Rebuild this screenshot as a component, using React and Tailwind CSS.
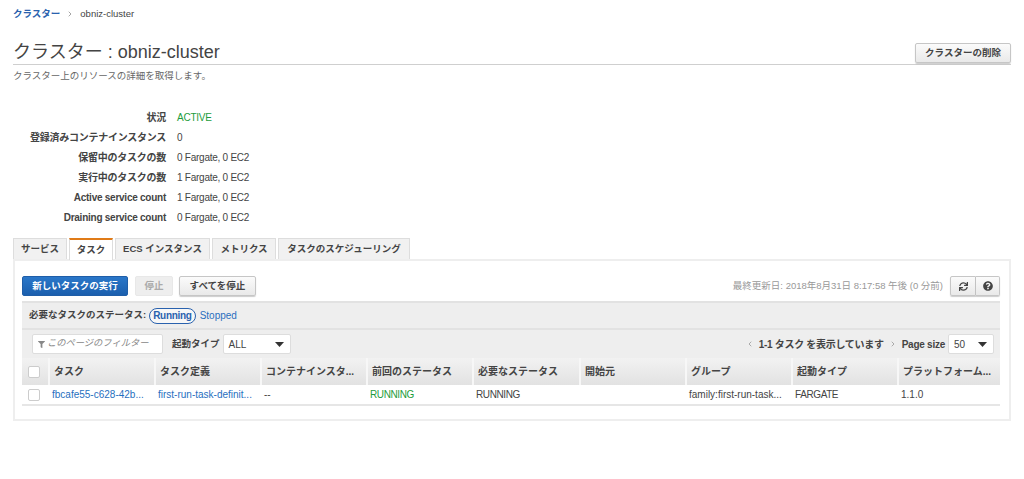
import { ChevronLeft, ChevronRight } from "lucide-react";
import { FaFilter, FaQuestionCircle, FaSync } from "react-icons/fa";

const details = [
  { label: "状況", value: "ACTIVE", green: true },
  { label: "登録済みコンテナインスタンス", value: "0" },
  { label: "保留中のタスクの数", value: "0 Fargate, 0 EC2" },
  { label: "実行中のタスクの数", value: "1 Fargate, 0 EC2" },
  { label: "Active service count", value: "1 Fargate, 0 EC2" },
  { label: "Draining service count", value: "0 Fargate, 0 EC2" },
];

const tabs = [
  { name: "サービス", width: "w-[54px]" },
  { name: "タスク", width: "w-[44px]", active: true },
  { name: "ECS インスタンス", width: "w-[95px]" },
  { name: "メトリクス", width: "w-[64px]" },
  { name: "タスクのスケジューリング", width: "w-[132px]" },
];

const columns = [
  { name: "タスク", width: "w-[106px]" },
  { name: "タスク定義", width: "w-[106px]" },
  { name: "コンテナインスタ...", width: "w-[106px]" },
  { name: "前回のステータス", width: "w-[106px]" },
  { name: "必要なステータス", width: "w-[107px]" },
  { name: "開始元", width: "w-[106px]" },
  { name: "グループ", width: "w-[106px]" },
  { name: "起動タイプ", width: "w-[106px]" },
  { name: "プラットフォーム...", width: "flex-1" },
];

const cells = [
  { text: "fbcafe55-c628-42b...", width: "w-[106px]", color: "text-[#1f6fc0]" },
  { text: "first-run-task-definit...", width: "w-[106px]", color: "text-[#1f6fc0]" },
  { text: "--", width: "w-[106px]" },
  { text: "RUNNING", width: "w-[106px]", color: "text-[#1d9c3c] tracking-[-0.4px]" },
  { text: "RUNNING", width: "w-[107px]", color: "tracking-[-0.4px]" },
  { text: "", width: "w-[106px]" },
  { text: "family:first-run-task...", width: "w-[106px]" },
  { text: "FARGATE", width: "w-[106px]", color: "tracking-[-0.4px]" },
  { text: "1.1.0", width: "flex-1" },
];

const btn =
  "h-5 rounded-[2px] border border-[#c6c6c6] bg-gradient-to-b from-[#fbfbfb] to-[#e9e9e9] text-[9.5px] font-bold text-[#444] shadow-[0_1px_1px_rgba(0,0,0,0.2)]";

const Check = () => (
  <span className="block h-3 w-3 rounded-[2px] border border-[#ccc] bg-white" />
);

const Caret = () => (
  <svg width="9" height="5" viewBox="0 0 9 5" className="ml-auto">
    <path d="M0 0h9L4.5 5z" fill="#333" />
  </svg>
);

export default function App() {
  return (
    <div className="h-[479px] overflow-hidden bg-white px-[13px] font-['Liberation_Sans','Noto_Sans_CJK_JP',sans-serif] text-[#444]">
      <div className="flex h-7 items-center text-[9.5px]">
        <span className="font-bold text-[#2a62ae]">クラスター</span>
        <ChevronRight size={8} className="mx-[6px] text-[#777]" />
        <span>obniz-cluster</span>
      </div>

      <div className="flex h-[37px] items-end justify-between border-b border-[#cfcfcf]">
        <h1 className="text-[18px] leading-[24px] text-[#444]">クラスター : obniz-cluster</h1>
        <button className={`${btn} mb-[1px] w-[96px]`}>クラスターの削除</button>
      </div>
      <p className="mt-[4px] text-[9.5px] leading-[14px] text-[#666]">クラスター上のリソースの詳細を取得します。</p>

      <div className="mt-[24px]">
        {details.map((d) => (
          <div key={d.label} className="flex h-5 items-center text-[10px] tracking-[-0.25px]">
            <span className="w-[153px] text-right font-bold text-[#444]">{d.label}</span>
            <span className={`ml-[11px] ${d.green ? "text-[#1d9c3c]" : ""}`}>{d.value}</span>
          </div>
        ))}
      </div>

      <div className="mt-[11px] flex gap-[2px]">
        {tabs.map((t) => (
          <div
            key={t.name}
            className={`${t.width} relative z-10 flex items-center justify-center border border-b-0 border-[#ddd] text-[9.5px] font-bold ${
              t.active
                ? "h-[22px] border-t-2 border-t-[#e07b18] bg-white"
                : "mb-[1px] h-[21px] bg-[#f1f1f1]"
            }`}
          >
            {t.name}
          </div>
        ))}
      </div>

      <div className="mt-[-1px] h-[162px] border-2 border-[#eee] pl-[7px] pr-[9px] pt-[15px]">
        <div className="flex items-center gap-[7px]">
          <button className="h-5 w-[106px] rounded-[2px] border border-[#1f5ea8] bg-gradient-to-b from-[#2a77c9] to-[#1b5fae] text-[9.5px] font-bold text-white">
            新しいタスクの実行
          </button>
          <button className="h-5 w-[38px] rounded-[2px] border border-[#e8e8e8] bg-[#eee] text-[9.5px] font-bold text-[#aaa]">
            停止
          </button>
          <button className={`${btn} ml-[-1px] w-[77px]`}>すべてを停止</button>
          <span className="ml-auto text-[9.5px] text-[#999]">最終更新日: 2018年8月31日 8:17:58 午後 (0 分前)</span>
          <div className="flex">
            <button className={`${btn} flex w-[26px] items-center justify-center rounded-r-none`}>
              <FaSync size={9} />
            </button>
            <button className={`${btn} flex w-6 items-center justify-center rounded-l-none border-l-0`}>
              <FaQuestionCircle size={10} />
            </button>
          </div>
        </div>

        <div className="mt-[5px] flex h-[29px] items-center border-t-2 border-b-2 border-[#e2e2e2] bg-[#eee] px-[7px] text-[10px]">
          <span className="text-[9.5px] font-bold">必要なタスクのステータス:</span>
          <span className="ml-[3px] rounded-full border border-[#2a62ae] bg-[#f7f7f7] px-[3px] text-[10px] leading-[14px] font-bold tracking-[-0.3px] text-[#2a62ae]">Running</span>
          <span className="ml-[4px] text-[#2a6fbe]">Stopped</span>
        </div>

        <div className="flex h-[28px] items-center bg-[#eee] pl-[10px] pr-[6px] text-[10px]">
          <div className="flex h-[20px] w-[131px] items-center gap-[2px] rounded-[2px] border border-[#ddd] bg-white pl-[5px] text-[9.25px] italic text-[#888]">
            <FaFilter size={7} className="text-[#888]" />
            このページのフィルター
          </div>
          <span className="ml-[9px] text-[9.5px] font-bold">起動タイプ</span>
          <div className="ml-[3px] flex h-[20px] w-[68px] items-center rounded-[2px] border border-[#ddd] bg-white px-[5px] pr-[6px]">
            ALL
            <Caret />
          </div>
          <ChevronLeft size={8} className="ml-auto text-[#888]" />
          <span className="ml-[5px] text-[10px] font-bold tracking-[-0.3px]">1-1 タスク を表示しています</span>
          <ChevronRight size={8} className="ml-[5px] text-[#888]" />
          <span className="ml-[5px] text-[10px] font-bold tracking-[-0.25px]">Page size</span>
          <div className="ml-[3px] flex h-[20px] w-[46px] items-center rounded-[2px] border border-[#ddd] bg-white px-[5px] pr-[6px]">
            50
            <Caret />
          </div>
        </div>

        <div className="flex h-[27px] bg-gradient-to-b from-[#f2f2f2] to-[#e2e2e2] text-[10px] font-bold">
          <div className="flex w-[26px] items-center pl-[6px]">
            <Check />
          </div>
          {columns.map((c) => (
            <div key={c.name} className={`${c.width} flex items-center border-l-2 border-[#f7f7f7] pl-[4px]`}>
              {c.name}
            </div>
          ))}
        </div>

        <div className="flex h-[21px] border-b-2 border-[#e6e6e6] text-[10px]">
          <div className="flex w-[26px] items-center pl-[6px]">
            <Check />
          </div>
          {cells.map((c, i) => (
            <div key={i} className={`${c.width} flex items-center pl-[4px] whitespace-nowrap ${c.color || ""}`}>
              {c.text}
            </div>
          ))}
        </div>
      </div>
    </div>
  );
}
